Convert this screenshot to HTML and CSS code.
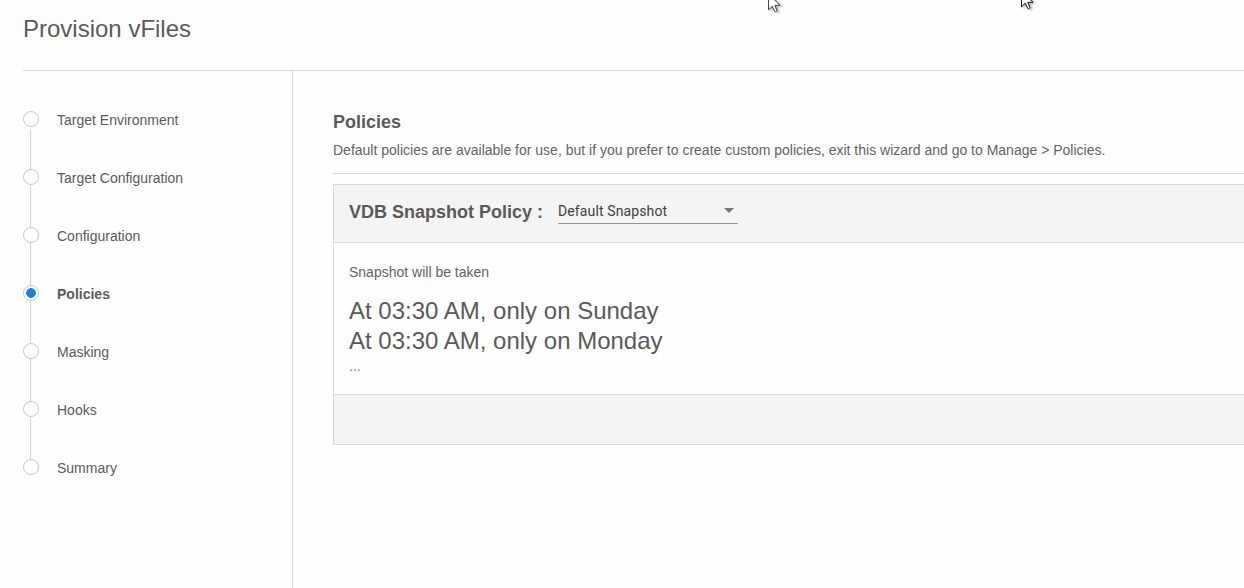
FILE: index.html
```html
<!DOCTYPE html>
<html lang="en">
<head>
<meta charset="utf-8">
<title>Provision vFiles</title>
<link rel="stylesheet" href="styles.css">
</head>
<body>
<div class="wizard">
  <header class="wizard-header"><h1>Provision vFiles</h1></header>
  <div class="wizard-body">
    <ol class="steps">
      <li class="step"><span class="dot"></span><span class="label">Target Environment</span></li>
      <li class="step"><span class="dot"></span><span class="label">Target Configuration</span></li>
      <li class="step"><span class="dot"></span><span class="label">Configuration</span></li>
      <li class="step active"><span class="dot"></span><span class="label">Policies</span></li>
      <li class="step"><span class="dot"></span><span class="label">Masking</span></li>
      <li class="step"><span class="dot"></span><span class="label">Hooks</span></li>
      <li class="step"><span class="dot"></span><span class="label">Summary</span></li>
    </ol>
    <main class="content">
      <h2>Policies</h2>
      <p class="description">Default policies are available for use, but if you prefer to create custom policies, exit this wizard and go to Manage &gt; Policies.</p>
      <section class="card">
        <div class="card-header">
          <h3>VDB Snapshot Policy :</h3>
          <div class="select"><span>Default Snapshot</span><svg width="10" height="5" viewBox="0 0 10 5"><path d="M0 0h10L5 5z" fill="#757575"/></svg></div>
        </div>
        <div class="card-body">
          <p class="caption">Snapshot will be taken</p>
          <p class="schedule">At 03:30 AM, only on Sunday</p>
          <p class="schedule">At 03:30 AM, only on Monday</p>
          <p class="more">...</p>
        </div>
        <div class="card-footer"></div>
      </section>
    </main>
  </div>
</div>
<svg class="pointer pointer-left" width="20" height="24" viewBox="0 0 20 24"><path d="M.5.8v16l3.8-3.6 2.4 5.2c.8.7 2.2.2 2.2-1L6.8 12.3h5.2z" fill="#fff" stroke="#41414b"/></svg>
<svg class="pointer pointer-right" width="20" height="24" viewBox="0 0 20 24"><path d="M.5.8v16l3.8-3.6 2.4 5.2c.8.7 2.2.2 2.2-1L6.8 12.3h5.2z" fill="#fff" stroke="#10101c"/></svg>
</body>
</html>
```
FILE: styles.css
```css
* { box-sizing: border-box; }
body {
  margin: 0;
  height: 588px;
  overflow: hidden;
  position: relative;
  background: #fefefe;
  color: #5a5a5a;
  font: 14px/20px "Liberation Sans", Arial, sans-serif;
}
h1, h2, h3, p, ol { margin: 0; padding: 0; }
.wizard { height: 588px; padding-left: 23px; display: flex; flex-direction: column; }
.wizard-header { height: 71px; padding-top: 14px; border-bottom: 1px solid #d9d9d9; }
h1 { font-size: 24px; line-height: 30px; font-weight: 400; }
.wizard-body { flex: 1; display: flex; min-height: 0; }
.steps { width: 270px; border-right: 1px solid #d9d9d9; padding-top: 40px; list-style: none; }
.step { position: relative; display: flex; gap: 18px; height: 58px; }
.step:not(:last-child)::before {
  content: "";
  position: absolute;
  left: 7px;
  top: 16px;
  width: 1px;
  height: 50px;
  background: #d2d2d2;
}
.step:first-child::before { top: 18px; height: 48px; }
.dot {
  position: relative;
  width: 16px;
  height: 16px;
  border: 1px solid #c8c8c8;
  border-radius: 50%;
  background: #fff;
}
.label { line-height: 18px; }
.active .dot { background: radial-gradient(circle, #1683de 4.5px, #fff 5.2px); }
.active .label { font-weight: 700; }
.content { flex: 1; padding: 40px 0 0 40px; }
h2 { font-size: 18px; line-height: 22px; }
.description { height: 41px; padding-top: 7px; border-bottom: 1px solid #d9d9d9; color: #636363; white-space: nowrap; }
.card { margin-top: 10px; border: 1px solid #d9d9d9; border-right: 0; }
.card-header {
  height: 58px;
  padding: 0 15px 4px;
  display: flex;
  align-items: center;
  gap: 15px;
  background: #f4f4f4;
  border-bottom: 1px solid #d9d9d9;
}
h3 { width: 194px; font-size: 18px; line-height: 22px; white-space: nowrap; }
.select {
  width: 180px;
  height: 24px;
  padding: 0 4px 1px 0;
  display: flex;
  align-items: center;
  justify-content: space-between;
  border-bottom: 1px solid #949494;
  color: #424242;
  font-family: Roboto, sans-serif;
  letter-spacing: .12px;
}
.card-body { height: 151px; padding: 19px 15px 0; }
.caption { margin-bottom: 14px; color: #636363; }
.schedule { font-size: 24px; line-height: 30px; }
.more { line-height: 16px; margin-top: 2px; color: #7c7c7c; }
.card-footer { height: 50px; background: #f4f4f4; border-top: 1px solid #d9d9d9; }
.pointer { position: absolute; filter: drop-shadow(2px 1px 1px rgba(0, 0, 0, .3)); }
.pointer-left { left: 768px; top: -7px; }
.pointer-right { left: 1021px; top: -10px; }
```
